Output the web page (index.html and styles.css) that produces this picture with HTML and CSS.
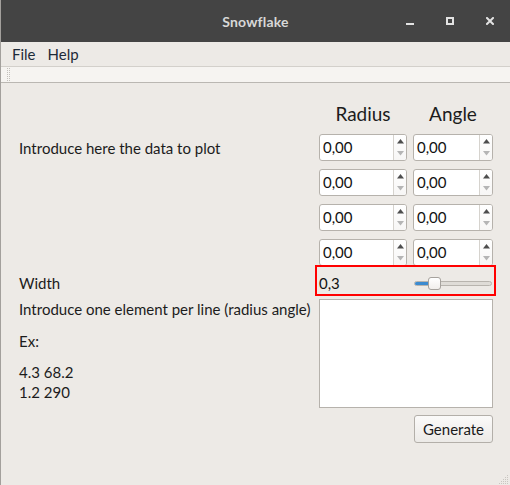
FILE: index.html
```html
<!DOCTYPE html>
<html lang="en">
<head>
<meta charset="utf-8">
<title>Snowflake</title>
<link rel="stylesheet" href="styles.css">
</head>
<body>
<div class="window">
  <header class="titlebar">
    <span></span>
    <span class="title">Snowflake</span>
    <div class="wbtns">
      <span class="wbtn"><svg width="8" height="8" viewBox="0 0 8 8"><rect x="0" y="6" width="8" height="2" fill="#e2e2e2"/></svg></span>
      <span class="wbtn"><svg width="8" height="8" viewBox="0 0 8 8"><rect x="1" y="1" width="6" height="6" fill="none" stroke="#e2e2e2" stroke-width="2"/></svg></span>
      <span class="wbtn"><svg width="8" height="8" viewBox="0 0 8 8"><path d="M1 1 L7 7 M7 1 L1 7" stroke="#e2e2e2" stroke-width="2" stroke-linecap="square"/></svg></span>
    </div>
  </header>
  <nav class="menubar">
    <span class="menu-item">File</span>
    <span class="menu-item">Help</span>
  </nav>
  <div class="toolbar"><span class="grip"></span></div>
  <main class="content">
    <div class="row head">
      <div class="label"></div>
      <div class="cell pair">
        <span class="col-a">Radius</span>
        <span class="col-b">Angle</span>
      </div>
    </div>

    <div class="row spins">
      <div class="label">Introduce here the data to plot</div>
      <div class="cell pair">
        <div class="spin col-a"><span class="val">0,00</span><span class="arrows"><svg width="7" height="17" viewBox="0 0 7 17"><polygon points="0,4.5 3.5,0 7,4.5" fill="#4d4d4d"/><polygon points="0,12 7,12 3.5,16.5" fill="#b5b5b5"/></svg></span></div>
        <div class="spin col-b"><span class="val">0,00</span><span class="arrows"><svg width="7" height="17" viewBox="0 0 7 17"><polygon points="0,4.5 3.5,0 7,4.5" fill="#4d4d4d"/><polygon points="0,12 7,12 3.5,16.5" fill="#b5b5b5"/></svg></span></div>
      </div>
    </div>

    <div class="row spins">
      <div class="label"></div>
      <div class="cell pair">
        <div class="spin col-a"><span class="val">0,00</span><span class="arrows"><svg width="7" height="17" viewBox="0 0 7 17"><polygon points="0,4.5 3.5,0 7,4.5" fill="#4d4d4d"/><polygon points="0,12 7,12 3.5,16.5" fill="#b5b5b5"/></svg></span></div>
        <div class="spin col-b"><span class="val">0,00</span><span class="arrows"><svg width="7" height="17" viewBox="0 0 7 17"><polygon points="0,4.5 3.5,0 7,4.5" fill="#4d4d4d"/><polygon points="0,12 7,12 3.5,16.5" fill="#b5b5b5"/></svg></span></div>
      </div>
    </div>

    <div class="row spins">
      <div class="label"></div>
      <div class="cell pair">
        <div class="spin col-a"><span class="val">0,00</span><span class="arrows"><svg width="7" height="17" viewBox="0 0 7 17"><polygon points="0,4.5 3.5,0 7,4.5" fill="#4d4d4d"/><polygon points="0,12 7,12 3.5,16.5" fill="#b5b5b5"/></svg></span></div>
        <div class="spin col-b"><span class="val">0,00</span><span class="arrows"><svg width="7" height="17" viewBox="0 0 7 17"><polygon points="0,4.5 3.5,0 7,4.5" fill="#4d4d4d"/><polygon points="0,12 7,12 3.5,16.5" fill="#b5b5b5"/></svg></span></div>
      </div>
    </div>

    <div class="row spins">
      <div class="label"></div>
      <div class="cell pair">
        <div class="spin col-a"><span class="val">0,00</span><span class="arrows"><svg width="7" height="17" viewBox="0 0 7 17"><polygon points="0,4.5 3.5,0 7,4.5" fill="#4d4d4d"/><polygon points="0,12 7,12 3.5,16.5" fill="#b5b5b5"/></svg></span></div>
        <div class="spin col-b"><span class="val">0,00</span><span class="arrows"><svg width="7" height="17" viewBox="0 0 7 17"><polygon points="0,4.5 3.5,0 7,4.5" fill="#4d4d4d"/><polygon points="0,12 7,12 3.5,16.5" fill="#b5b5b5"/></svg></span></div>
      </div>
    </div>

    <div class="row width-row">
      <div class="label">Width</div>
      <div class="cell slider-cell">
        <span class="slider-val">0,3</span>
        <div class="slider">
          <div class="groove"><div class="fill" style="width:18%"></div></div>
          <div class="handle"></div>
        </div>
      </div>
    </div>

    <div class="row text-row">
      <div class="label help">
        <p class="line">Introduce one element per line (radius angle)</p>
        <p class="line ex">Ex:</p>
        <p class="line sample">4.3 68.2</p>
        <p class="line">1.2 290</p>
      </div>
      <div class="cell"><textarea class="entry"></textarea></div>
    </div>

    <div class="row actions">
      <div class="label"></div>
      <div class="cell"><button class="btn">Generate</button></div>
    </div>
  </main>
  <svg class="size-grip" width="11" height="11" viewBox="0 0 11 11">
    <g fill="#c9c6c1">
      <rect x="9" y="1" width="1" height="1"/>
      <rect x="7" y="3" width="1" height="1"/><rect x="9" y="3" width="1" height="1"/>
      <rect x="5" y="5" width="1" height="1"/><rect x="7" y="5" width="1" height="1"/><rect x="9" y="5" width="1" height="1"/>
      <rect x="3" y="7" width="1" height="1"/><rect x="5" y="7" width="1" height="1"/><rect x="7" y="7" width="1" height="1"/><rect x="9" y="7" width="1" height="1"/>
      <rect x="1" y="9" width="1" height="1"/><rect x="3" y="9" width="1" height="1"/><rect x="5" y="9" width="1" height="1"/><rect x="7" y="9" width="1" height="1"/><rect x="9" y="9" width="1" height="1"/>
    </g>
  </svg>
</div>
</body>
</html>
```

FILE: styles.css
```css
* { box-sizing: border-box; }

html, body {
  margin: 0;
  padding: 0;
  background: #edeae6;
}

body {
  font-family: "Lato", "Noto Sans", sans-serif;
  font-size: 15px;
  color: #1c1c1c;
}

.window {
  position: relative;
  width: 510px;
  height: 485px;
  border-left: 1px solid #a3a09c;
  background: #edeae6;
  overflow: hidden;
}

/* Title bar */
.titlebar {
  display: grid;
  grid-template-columns: 1fr auto 1fr;
  align-items: center;
  height: 42px;
  background: #444444;
}

.title {
  font-weight: 700;
  font-size: 14px;
  color: #d8d8d8;
  letter-spacing: 0.2px;
}

.wbtns {
  display: flex;
  justify-content: flex-end;
}

.wbtn {
  display: flex;
  align-items: center;
  justify-content: center;
  width: 40px;
  height: 42px;
}

/* Menu bar */
.menubar {
  display: flex;
  height: 24px;
  align-items: center;
  padding-left: 5px;
  background: #edeae6;
}

.menu-item {
  padding: 0 6px;
  line-height: 18px;
  font-size: 15px;
  color: #1e2a38;
}

/* Toolbar */
.toolbar {
  height: 17px;
  border-top: 1px solid #d3d0cb;
  border-bottom: 1px solid #bab7b2;
  background: #f6f4f1;
  padding: 1px 0 0 6px;
}

.grip {
  display: block;
  width: 4px;
  height: 14px;
  background:
    linear-gradient(to bottom, transparent 50%, #f6f4f1 50%) 0 0 / 2px 2px,
    linear-gradient(to right, #c3c0bb 50%, transparent 50%) 0 0 / 2px 2px;
}

/* Content */
.content {
  padding: 18px 0 0 18px;
}

.row {
  display: flex;
}

.label {
  flex: none;
  width: 300px;
  line-height: 18px;
}

.cell {
  flex: none;
  width: 174px;
}

.pair {
  display: flex;
  gap: 6px;
}

.col-a { width: 88px; }
.col-b { width: 80px; }

.head .pair span {
  font-size: 19px;
  line-height: 25px;
  text-align: center;
  color: #1c1c1c;
}

.spins {
  margin-top: 8px;
  align-items: center;
}

.spin {
  display: flex;
  height: 27px;
  border: 1px solid #b6b2ac;
  border-radius: 3px;
  background: #ffffff;
  overflow: hidden;
}

.spin .val {
  flex: 1;
  padding-left: 3px;
  line-height: 25px;
  color: #111;
}

.spin .arrows {
  flex: none;
  width: 13px;
  border-left: 1px solid #d6d3ce;
  display: flex;
  align-items: center;
  justify-content: center;
  background: linear-gradient(#ffffff, #f7f6f5);
}

.spin .arrows svg { display: block; }

/* Width row */
.width-row {
  margin-top: 3px;
  height: 28px;
  align-items: center;
}

.slider-cell {
  position: relative;
  display: flex;
  align-items: center;
  height: 28px;
}

.slider-cell::after {
  content: "";
  position: absolute;
  top: -4px;
  left: -4px;
  right: -3px;
  bottom: 1px;
  border: 2px solid #ff0000;
  pointer-events: none;
}

.slider-val {
  line-height: 18px;
  color: #111;
}

.slider {
  position: relative;
  width: 78px;
  height: 13px;
  margin-left: auto;
  margin-right: 1px;
}

.groove {
  position: absolute;
  left: 0;
  right: 0;
  top: 4px;
  height: 5px;
  border: 1px solid #b8b4ae;
  border-radius: 3px;
  background: #dfdcd7;
  overflow: hidden;
}

.fill {
  height: 100%;
  background: #3c8bd0;
}

.handle {
  position: absolute;
  top: 0;
  left: 14px;
  width: 13px;
  height: 13px;
  border: 1px solid #a6a29d;
  border-radius: 3px;
  background: linear-gradient(#ffffff, #f1efec);
}

/* Text row */
.text-row {
  margin-top: 2px;
}

.help .line {
  margin: 0;
  line-height: 20px;
}

.help .ex { margin-top: 12px; }
.help .sample { margin-top: 11px; }

.entry {
  display: block;
  width: 174px;
  height: 109px;
  margin: 0;
  border: 1px solid #b6b2ac;
  border-radius: 0;
  background: #ffffff;
  resize: none;
  outline: none;
}

/* Actions */
.actions {
  margin-top: 7px;
}

.actions .cell {
  display: flex;
  justify-content: flex-end;
}

.btn {
  width: 79px;
  height: 28px;
  padding: 0;
  border: 1px solid #b3afa9;
  border-radius: 3px;
  background: linear-gradient(#fbfaf9, #eceae7);
  font-family: "Lato", "Noto Sans", sans-serif;
  font-size: 15px;
  color: #1a1a1a;
}

.size-grip {
  position: absolute;
  right: 1px;
  bottom: 0;
}
```
